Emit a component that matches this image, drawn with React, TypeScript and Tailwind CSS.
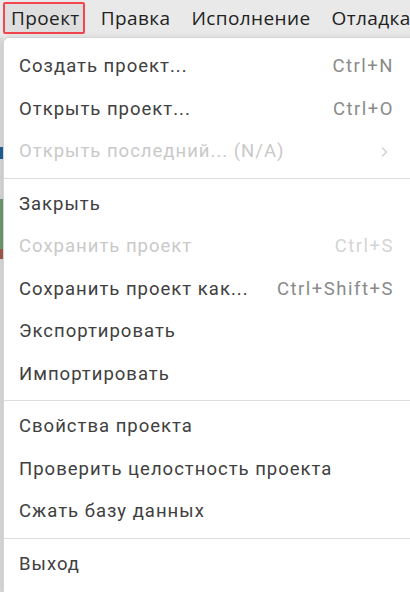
import React from "react";

type Item =
  | { sep: true }
  | { sep?: false; label: string; shortcut?: string; disabled?: boolean; sub?: boolean };

const items: Item[] = [
  { label: "Создать проект...", shortcut: "Ctrl+N" },
  { label: "Открыть проект...", shortcut: "Ctrl+O" },
  { label: "Открыть последний... (N/A)", disabled: true, sub: true },
  { sep: true },
  { label: "Закрыть" },
  { label: "Сохранить проект", shortcut: "Ctrl+S", disabled: true },
  { label: "Сохранить проект как...", shortcut: "Ctrl+Shift+S" },
  { label: "Экспортировать" },
  { label: "Импортировать" },
  { sep: true },
  { label: "Свойства проекта" },
  { label: "Проверить целостность проекта" },
  { label: "Сжать базу данных" },
  { sep: true },
  { label: "Выход" },
];

const menus = ["Проект", "Правка", "Исполнение", "Отладка"];

export default function App() {
  return (
    <div className="w-[410px] h-[592px] overflow-hidden bg-[#e9e9e9] flex flex-col" style={{ fontFamily: "Roboto, sans-serif" }}>
      {/* menubar */}
      <div className="h-[37px] flex items-start pt-[2px] pl-[3px] gap-[8px] whitespace-nowrap text-[19px] tracking-[0.4px] text-[#222222]" style={{ fontFamily: "'Open Sans', sans-serif" }}>
        {menus.map((m, i) => (
          <div
            key={m}
            className={
              i === 0
                ? "h-[32px] pl-[6px] pr-[3px] flex items-center border-2 border-[#f2454d] rounded-[2px] bg-[#dedede]"
                : "h-[32px] pl-[6px] pr-[3px] flex items-center border-2 border-transparent"
            }
          >
            {m}
          </div>
        ))}
      </div>

      <div className="flex flex-1 min-h-0">
        {/* sliver of the window behind */}
        <div className="w-[3px] flex flex-col">
          <div className="h-[110px] bg-[#dcdcdc]" />
          <div className="h-[12px] bg-[#1f5f9a]" />
          <div className="h-[40px] bg-[#d9d9d9]" />
          <div className="h-[50px] bg-[#6f9a72]" />
          <div className="h-[10px] bg-[#a25a4c]" />
          <div className="flex-1 bg-[#dcdcdc]" />
        </div>

        {/* dropdown */}
        <div className="flex-1 -mr-[6px] bg-white rounded-tl-[6px] border-l border-t border-[#d6d6d6] shadow-[0_2px_8px_rgba(0,0,0,0.15)] pt-[8px] text-[18.5px] tracking-[1px]">
          {items.map((it, i) =>
            it.sep ? (
              <div key={i} className="pt-[4px] pb-[5px]">
                <div className="h-px bg-[#dedede]" />
              </div>
            ) : (
              <div
                key={i}
                className={
                  "h-[42.5px] flex items-center justify-between pl-[15px] pr-[22px] whitespace-nowrap " +
                  (it.disabled ? "text-[#c9c9c9]" : "text-[#404040]")
                }
              >
                <span>{it.label}</span>
                {it.shortcut && (
                  <span className={"tracking-[1.5px] " + (it.disabled ? "text-[#d4d4d4]" : "text-[#8a8a8a]")}>{it.shortcut}</span>
                )}
                {it.sub && (
                  <svg width="10" height="14" viewBox="0 0 10 14" className="mr-[5px]">
                    <path d="M3 2.5 L7.5 7 L3 11.5" fill="none" stroke="#cfcfcf" strokeWidth="1.4" />
                  </svg>
                )}
              </div>
            )
          )}
        </div>
      </div>
    </div>
  );
}
